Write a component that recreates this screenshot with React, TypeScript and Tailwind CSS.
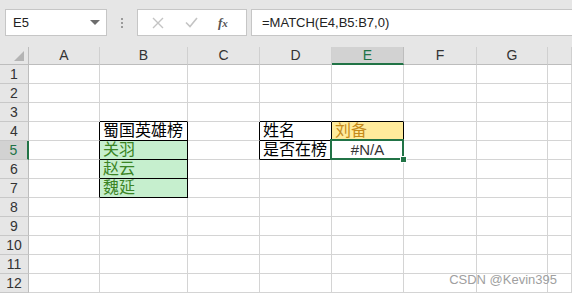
import * as React from 'react'

const cols = [
  { key: 'A', w: 'w-[71px]' },
  { key: 'B', w: 'w-[88px]' },
  { key: 'C', w: 'w-[72px]' },
  { key: 'D', w: 'w-[72px]' },
  { key: 'E', w: 'w-[72px]' },
  { key: 'F', w: 'w-[73px]' },
  { key: 'G', w: 'w-[71px]' },
  { key: 'H', w: 'flex-1' },
]

type Cell = { text?: string; cls?: string; center?: boolean }

// contenu des cellules
const data: Record<string, Cell> = {
  B4: { text: '蜀国英雄榜', cls: 'text-black' },
  B5: { text: '关羽', cls: 'bg-[#c6efce] text-[#3a8424]' },
  B6: { text: '赵云', cls: 'bg-[#c6efce] text-[#3a8424]' },
  B7: { text: '魏延', cls: 'bg-[#c6efce] text-[#3a8424]' },
  D4: { text: '姓名', cls: 'text-black' },
  D5: { text: '是否在榜', cls: 'text-black' },
  E4: { text: '刘备', cls: 'bg-[#ffeb9c] text-[#c58a1a]' },
  E5: { text: '#N/A', cls: 'text-[#333]', center: true },
}

// bordures noires (tableaux B4:B7 et D4:E5)
const blackRight = new Set(['A4', 'A5', 'A6', 'A7', 'B4', 'B5', 'B6', 'B7', 'C4', 'C5', 'D4', 'D5', 'E4', 'E5'])
const blackBottom = new Set(['B3', 'B4', 'B5', 'B6', 'B7', 'D3', 'E3', 'D4', 'E4', 'D5', 'E5'])

function GridCell({ id, w }: { id: string; w: string }) {
  const c = data[id]
  const selected = id === 'E5'
  return (
    <div
      className={[
        'relative box-border h-full shrink-0 border-r border-b flex items-end overflow-visible',
        w,
        blackRight.has(id) ? 'border-r-black' : 'border-r-[#d4d4d4]',
        blackBottom.has(id) ? 'border-b-black' : 'border-b-[#d4d4d4]',
        c?.cls ?? '',
      ].join(' ')}
    >
      {c?.text && (
        <span
          className={
            c.center
              ? "w-full text-center text-[15px] leading-[18px] font-['Liberation_Sans',sans-serif]"
              : "pl-[3px] text-[16px] leading-[18px] whitespace-nowrap font-['Liberation_Sans','Noto_Sans_CJK_SC',sans-serif]"
          }
        >
          {c.text}
        </span>
      )}
      {selected && (
        <>
          <div className="absolute -left-[2px] -top-[2px] -right-[1px] -bottom-[1px] border-2 border-[#217346] z-10" />
          <div className="absolute -right-[4px] -bottom-[4px] w-[7px] h-[7px] bg-[#217346] border border-white z-20" />
        </>
      )}
    </div>
  )
}

export default function App() {
  const rows = Array.from({ length: 12 }, (_, i) => i + 1)

  return (
    <div className="relative w-[572px] h-[295px] overflow-hidden bg-white font-['Liberation_Sans',sans-serif]">
      {/* Barre de formule */}
      <div className="h-[47px] bg-[#e6e6e6] flex items-start pt-[9px]">
        <div className="ml-[5px] w-[102px] h-[27px] bg-white border border-[#c6c6c6] flex items-center justify-between pl-[7px] pr-[6px]">
          <span className="text-[13px] text-[#222]">E5</span>
          <svg width="10" height="5" viewBox="0 0 10 5">
            <path d="M0 0 H10 L5 5 Z" fill="#6d6d6d" />
          </svg>
        </div>
        <div className="w-[30px] h-[27px] flex flex-col items-center justify-center gap-[2px]">
          <div className="w-[2px] h-[2px] bg-[#9a9a9a]" />
          <div className="w-[2px] h-[2px] bg-[#9a9a9a]" />
          <div className="w-[2px] h-[2px] bg-[#9a9a9a]" />
        </div>
        <div className="w-[110px] h-[27px] bg-white border border-[#c6c6c6] flex items-center">
          <svg className="ml-[14px]" width="12" height="12" viewBox="0 0 12 12">
            <path d="M1 1 L11 11 M11 1 L1 11" stroke="#c4c4c4" strokeWidth="1.4" />
          </svg>
          <svg className="ml-[21px]" width="13" height="11" viewBox="0 0 13 11">
            <path d="M1 5.5 L5 9.5 L12 1" stroke="#c4c4c4" strokeWidth="1.6" fill="none" />
          </svg>
          <span className="ml-[20px] text-[13px] italic font-bold font-['Liberation_Serif',serif] text-[#555]">
            f<span className="text-[11px]">x</span>
          </span>
        </div>
        <div className="ml-[4px] flex-1 h-[27px] bg-white border border-[#c6c6c6] border-r-0 flex items-center pl-[10px]">
          <span className="text-[13px] text-[#222]">=MATCH(E4,B5:B7,0)</span>
        </div>
      </div>

      {/* En-têtes de colonnes */}
      <div className="h-[18px] flex bg-[#e6e6e6]">
        <div className="w-[29px] h-full shrink-0 box-border border-r border-b border-[#bdbdbd] relative flex items-end justify-end pr-[4px] pb-[3px]">
          <svg width="10" height="10" viewBox="0 0 10 10">
            <path d="M10 0 V10 H0 Z" fill="#b4b4b4" />
          </svg>
        </div>
        {cols.map(c => (
          <div
            key={c.key}
            className={[
              'h-full shrink-0 box-border border-r flex items-center justify-center text-[14px]',
              c.w,
              c.key === 'E'
                ? 'bg-[#d2d2d2] border-r-[#bdbdbd] border-b-2 border-b-[#217346] text-[#217346]'
                : 'border-r-[#d0d0d0] border-b border-b-[#bdbdbd] text-[#333]',
            ].join(' ')}
          >
            {/* la colonne H est coupée, son libellé est hors champ */}
            {c.key === 'H' ? null : c.key}
          </div>
        ))}
      </div>

      {/* Lignes */}
      {rows.map(r => (
        <div key={r} className="h-[19px] flex">
          <div
            className={[
              'w-[29px] h-full shrink-0 box-border border-b border-b-[#c8c8c8] flex items-center justify-center text-[14px]',
              r === 5
                ? 'bg-[#d2d2d2] border-r-2 border-r-[#217346] text-[#217346]'
                : 'bg-[#e6e6e6] border-r border-r-[#bdbdbd] text-[#333]',
            ].join(' ')}
          >
            {r}
          </div>
          {cols.map(c => (
            <GridCell key={c.key} id={`${c.key}${r}`} w={c.w} />
          ))}
        </div>
      ))}

      {/* Filigrane */}
      <div className="absolute right-[15px] bottom-[6px] text-[13px] text-[#a0a0a0] font-['Liberation_Sans',sans-serif] z-30">
        CSDN @Kevin395
      </div>
    </div>
  )
}
